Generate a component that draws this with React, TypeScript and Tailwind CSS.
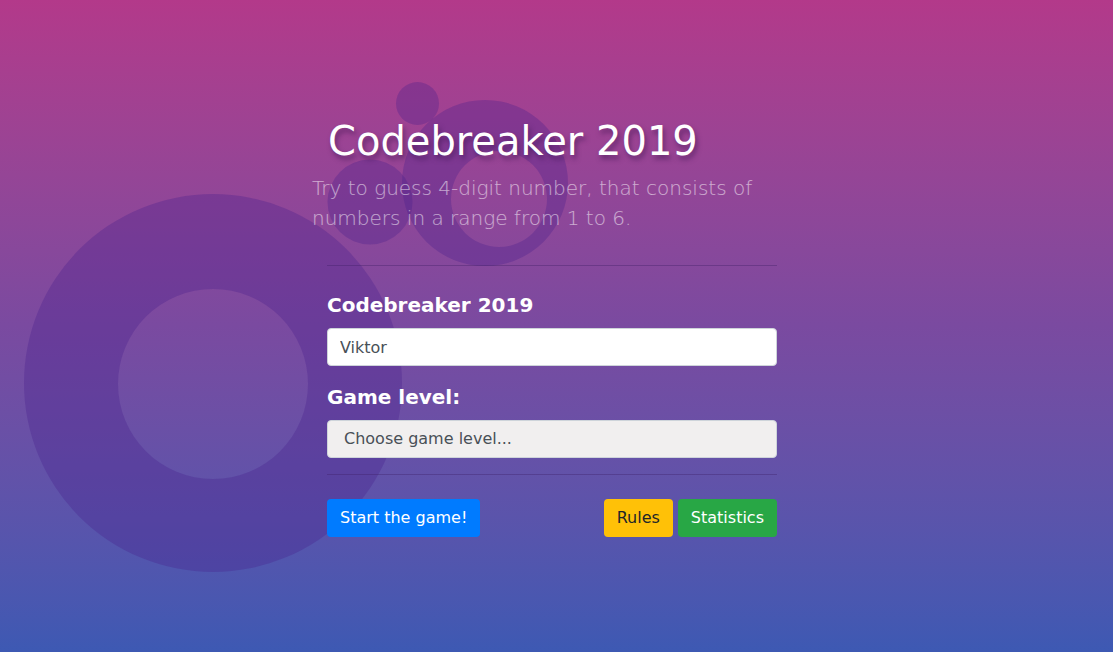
import React, { useState } from 'react'

// decorative bubbles behind the form
function Bubbles() {
  const ring = (cx: number, cy: number, r: number, ix: number, iy: number, ir: number) =>
    `M ${cx - r} ${cy} a ${r} ${r} 0 1 0 ${r * 2} 0 a ${r} ${r} 0 1 0 ${-r * 2} 0 Z ` +
    `M ${ix - ir} ${iy} a ${ir} ${ir} 0 1 0 ${ir * 2} 0 a ${ir} ${ir} 0 1 0 ${-ir * 2} 0 Z`

  return (
    <svg className="absolute inset-0 w-full h-full pointer-events-none" viewBox="0 0 1113 652" preserveAspectRatio="none">
      <g fill="rgba(70,30,140,0.32)">
        <path fillRule="evenodd" d={ring(213, 383, 189, 213, 384, 95)} />
        <path fillRule="evenodd" d={ring(485, 183, 83, 499, 199, 48)} />
        <circle cx="417.5" cy="103.5" r="21.5" />
        <circle cx="370" cy="202" r="42.5" />
      </g>
    </svg>
  )
}

export default function App() {
  const [name, setName] = useState('Viktor')

  return (
    <div
      className="relative w-full h-[652px] overflow-hidden bg-gradient-to-b from-[#b3398a] via-[#7a4aa0] to-[#3d59b3]"
      style={{ fontFamily: '"DejaVu Sans", sans-serif' }}
    >
      <Bubbles />

      <div className="relative w-[450px] ml-[327px] pt-[117px]">
        <h1 className="text-[40px] leading-[48px] text-white pl-px [text-shadow:2px_4px_5px_rgba(60,20,80,0.55)]">
          Codebreaker 2019
        </h1>
        <p className="-ml-[15px] mt-[8px] text-[20px] leading-[30px] font-light text-white/55">
          Try to guess 4-digit number, that consists of numbers in a range from 1 to 6.
        </p>

        <hr className="mt-[32px] border-t border-[rgba(60,30,100,0.35)]" />

        {/* form */}
        <div className="mt-[27px]">
          <label className="block text-[20px] leading-[24px] font-bold text-white">Codebreaker 2019</label>
          <input
            value={name}
            onChange={(e) => setName(e.target.value)}
            className="mt-[11px] w-full h-[38px] px-3 rounded border border-[#ced4da] bg-white text-[16px] text-[#495057] focus:outline-none"
          />

          <label className="block mt-[19px] text-[20px] leading-[24px] font-bold text-white">Game level:</label>
          <div className="mt-[11px] w-full h-[38px] pl-[16px] flex items-center rounded border border-[#ced4da] bg-[#f1efef] text-[16px] text-[#495057]">
            Choose game level...
          </div>
        </div>

        <hr className="mt-[16px] border-t border-[rgba(60,30,100,0.35)]" />

        <div className="mt-[24px] flex items-center">
          <button className="h-[38px] px-[13px] rounded bg-[#007bff] text-white text-[16px]">Start the game!</button>
          <div className="ml-auto flex gap-[5px]">
            <button className="h-[38px] px-[13px] rounded bg-[#ffc107] text-[#212529] text-[16px]">Rules</button>
            <button className="h-[38px] px-[13px] rounded bg-[#28a745] text-white text-[16px]">Statistics</button>
          </div>
        </div>
      </div>
    </div>
  )
}
